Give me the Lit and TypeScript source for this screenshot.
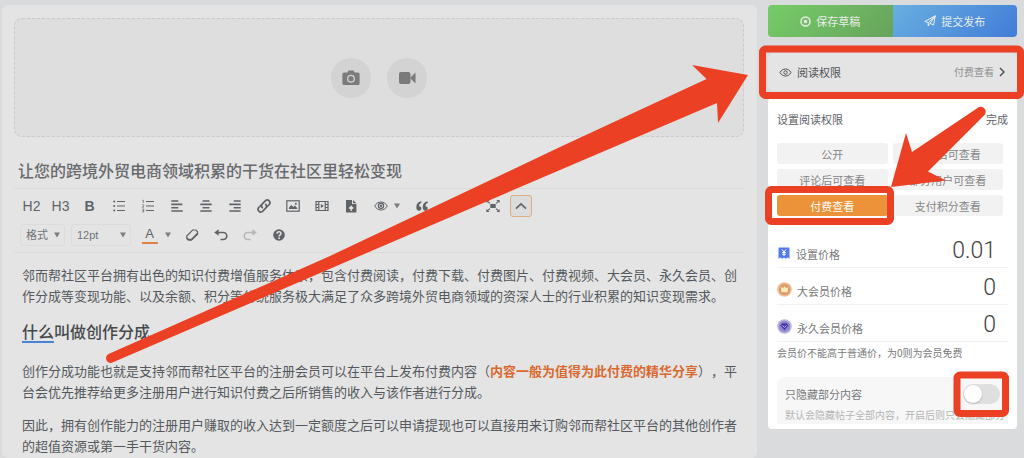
import { LitElement, html, css, svg, TemplateResult } from "lit";
import { customElement, state } from "lit/decorators.js";
import { classMap } from "lit/directives/class-map.js";

const caret = html`<svg class="caret" viewBox="0 0 6 6" aria-hidden="true"><path d="M0 .5h6L3 5.500z" fill="currentColor"/></svg>`;

const glyph = (body: TemplateResult | unknown, size = 16) =>
  html`<svg width=${size} height=${size} viewBox="0 0 16 16" fill="none" stroke="currentColor" stroke-width="1.2" aria-hidden="true">${body}</svg>`;

const icons: Record<string, unknown> = {
  ul: svg`<path d="M6 3.500h8M6 8h8M6 12.500h8" stroke-width="1"/><g fill="currentColor" stroke="none"><circle cx="3.200" cy="3.500" r="1"/><circle cx="3.200" cy="8" r="1"/><circle cx="3.200" cy="12.500" r="1"/></g>`,
  ol: svg`<path d="M6 3.500h8M6 8h8M6 12.500h8" stroke-width="1"/><path d="M2.400 2.500l.9-.5v3M2.200 6.800h1.400v1L2.300 9.300h1.500M2.200 11h1.500v3H2.200M2.500 12.500h1.200" stroke-width=".7"/>`,
  left: svg`<path d="M2.300 3h7M2.300 6.400h11M2.300 9.700h7M2.300 13h11.400" stroke-width="1.600"/>`,
  center: svg`<path d="M4.500 3h7M2.300 6.400h11.400M4.500 9.700h7M2.300 13h11.400" stroke-width="1.600"/>`,
  right: svg`<path d="M6.700 3h7M2.300 6.400h11.400M6.700 9.700h7M2.300 13h11.400" stroke-width="1.600"/>`,
  link: svg`<g stroke-width="1.700" stroke-linecap="round"><path d="M6.300 9.700a2.700 2.700 0 0 1 0-3.800l3.200-3.200a2.700 2.700 0 0 1 3.800 3.800l-2 2"/><path d="M9.700 6.300a2.700 2.700 0 0 1 0 3.800l-3.200 3.200a2.700 2.700 0 0 1-3.800-3.800l2-2"/></g>`,
  image: svg`<rect x="1.800" y="2.800" width="12.400" height="10.400"/><path d="M4 11V9.500L6.300 7l2 2 1.500-1.400L12.200 10v1z" fill="currentColor" stroke="none"/><circle cx="10.800" cy="5.800" r="1" fill="currentColor" stroke="none"/>`,
  film: svg`<path d="M2 3.500h12v9H2zM4.800 3.500v9M11.200 3.500v9M2 6.500h2.800M2 9.500h2.800M11.200 6.500H14M11.200 9.500H14"/><path d="M6.800 5.900v4.200L9.900 8z" fill="currentColor" stroke="none"/>`,
  file: svg`<path d="M3 2h6v4h4.400v8.500H3zM10 2l3.400 3.300H10z" fill="currentColor" stroke="none"/><path d="M8.200 13V9M6.200 10.600l2-2.100 2 2.100" stroke="#e4e4e4" stroke-width="1.400"/>`,
  eye: svg`<path d="M1.700 8c1.500-2.600 3.700-4 6.300-4s4.800 1.400 6.300 4c-1.500 2.600-3.700 4-6.300 4S3.200 10.600 1.700 8z" stroke-width="1"/><circle cx="8" cy="7.700" r="2.600" stroke-width="1.200"/><circle cx="8" cy="7.700" r="1.200" fill="currentColor" stroke="none"/>`,
  quote: svg`<path d="M7 3.300C4 4 2.300 6.200 2.300 9.300c0 2 1 3.400 2.700 3.400 1.300 0 2.300-1 2.300-2.300S6.400 8.200 5.100 8.200c0-1.700.9-2.900 2.500-3.500zM13.400 3.300C10.400 4 8.700 6.200 8.700 9.300c0 2 1 3.400 2.700 3.400 1.300 0 2.300-1 2.300-2.300s-.9-2.200-2.200-2.200c0-1.700.9-2.900 2.500-3.500z" fill="currentColor" stroke="none"/>`,
  code: svg`<path d="M5.500 4.500L2 8l3.500 3.500M10.500 4.500L14 8l-3.500 3.500" stroke-width="1.500"/>`,
  full: svg`<rect x="5.300" y="6" width="5.400" height="4" fill="currentColor" stroke="none"/><path d="M4 4.600L2 3M12 4.600L14 3M5 10.600L2 13M11 10.600L14 13M5 5.400L4 4.600M11 5.400l1-.8"/><path d="M1.400 2h3.200L1.400 5zM14.600 2h-3.200l3.200 3zM1.400 14h3.200l-3.200-3zM14.600 14h-3.200l3.200-3z" fill="currentColor" stroke="none"/>`,
  up: svg`<path d="M2.300 11L8 5.500l5.700 5.500" stroke-width="1.900"/>`,
  eraser: svg`<path d="M8.600 3h3.200l1.800 1.700v2.500L7.600 13H4.300l-1.500-1.500V9z" stroke-width="1.200"/><path d="M3 10.300l1.700 1.500h2.600l6-6.200v2L7.800 13.500H4.200L2.600 12z" fill="currentColor" stroke="none"/>`,
  undo: svg`<path d="M4 5.500h6.300a3.500 3.500 0 0 1 0 7H7.500" stroke-width="1.600"/><path d="M5.600 2.200v6.600L1.200 5.500z" fill="currentColor" stroke="none"/>`,
  redo: svg`<path d="M12 5.500H5.700a3.500 3.500 0 0 0 0 7h2.800" stroke-width="1.500"/><path d="M10.400 2.200v6.600l4.400-3.300z" fill="currentColor" stroke="none"/>`,
  help: svg`<circle cx="8" cy="8" r="5.800" fill="currentColor" stroke="none"/><path d="M6 6.600C6.100 5.300 7 4.700 8 4.700s2 .7 2 1.800c0 1.300-1.900 1.400-1.900 2.900" stroke="#e4e4e4" stroke-width="1.500"/><circle cx="8.100" cy="11.200" r=".9" fill="#e4e4e4" stroke="none"/>`,
};

const tools: [string, string, boolean?][] = [
  ["ul", "无序列表"], ["ol", "有序列表"], ["left", "左对齐"], ["center", "居中"], ["right", "右对齐"],
  ["link", "链接"], ["image", "图片"], ["film", "视频"], ["file", "文件"], ["eye", "隐藏内容", true],
  ["quote", "引用"], ["code", "代码", true], ["full", "全屏"],
];

const options = ["公开", "登录后可查看", "评论后可查看", "部分用户可查看", "付费查看", "支付积分查看"];

@customElement("post-editor")
export class PostEditor extends LitElement {
  static styles = css`
    :host { display: block; background: #e4e4e4; border-radius: 6px; padding: 13px 13px 0 12px; min-width: 0; color: #54585c; }
    * { box-sizing: border-box; }
    svg { display: block; flex: none; }
    button, input, select { font: inherit; color: inherit; background: none; border: 0; padding: 0; margin: 0; }
    .upload { height: 119px; border: 1px dashed #cbcbcb; border-radius: 8px; background: #dedede; display: flex; align-items: center; justify-content: center; gap: 16px; }
    .round { width: 40px; height: 40px; border-radius: 50%; background: #d3d3d3; color: #7b7b7b; display: grid; place-items: center; }
    .title { display: block; width: 100%; height: 24px; margin: 21px 0 6px; padding: 0 4px; font-size: 16px; font-weight: 500; color: #67696d; }
    .toolbar { border: 1px solid #dadada; border-width: 1px 0; padding: 6px 3px; display: grid; gap: 7px; font-family: "Liberation Sans", "Noto Sans CJK SC", sans-serif; font-size: 14px; color: #5f6367; }
    .row { display: flex; align-items: center; height: 22px; }
    .tool { width: 29px; height: 22px; display: flex; align-items: center; justify-content: center; gap: 5px; line-height: 22px; }
    .bold { font-weight: 700; }
    .wide { width: 42px; }
    .open { width: 22px; margin-left: 3px; border: 1px solid #dcaf82; border-radius: 3px; background: #dcdcdc; }
    .faded { color: #b4b6b8; }
    .caret { width: 6px; height: 6px; color: #7b7d80; }
    .pick { display: grid; grid-template-columns: 1fr 6px; align-items: center; height: 22px; border: 1px solid #dcdcdc; border-radius: 3px; padding: 0 4px 0 5px; margin-left: 3px; font-size: 11px; color: #707376; }
    .pick select { grid-area: 1 / 1 / 2 / 3; appearance: none; width: 100%; outline: 0; }
    .pick .caret { grid-area: 1 / 2; pointer-events: none; }
    .format { width: 45px; }
    .size { width: 60px; margin-left: 6px; margin-right: 4px; }
    .letter { width: 16px; height: 18px; line-height: 16px; border-bottom: 2px solid #e0824a; font-size: 13px; }
    .color { width: 42px; gap: 7px; }
    .content { padding: 11px 0 0 8px; font-size: 13px; line-height: 21px; text-spacing-trim: space-all; }
    .content p { margin: 0 0 12px; }
    .content p:last-child { margin: 0; }
    .content h2 { margin: 13px 0 17px; font-size: 16px; line-height: 24px; font-weight: 500; color: #46494c; }
    .mark { background: linear-gradient(#4a83d6, #4a83d6) bottom / 100% 2px no-repeat; }
    .content strong { color: #d9692f; font-weight: 700; }
  `;

  render() {
    return html`
      <div class="upload">
        <button class="round" aria-label="上传图片">
          <svg width="18" height="16" viewBox="0 0 18 16"><path d="M2 2.500h3.500L6.500.6h5l1 1.900H16A1.600 1.600 0 0 1 17.600 4v9.400A1.600 1.600 0 0 1 16 15H2a1.600 1.600 0 0 1-1.600-1.600V4A1.600 1.600 0 0 1 2 2.500z" fill="currentColor"/><circle cx="9" cy="8.700" r="3.300" fill="none" stroke="#d3d3d3" stroke-width="1.300"/></svg>
        </button>
        <button class="round" aria-label="上传视频">
          <svg width="17" height="12" viewBox="0 0 17 12"><rect width="11.500" height="12" rx="2" fill="currentColor"/><path d="M11 6l5.500-5.400v10.800z" fill="currentColor"/></svg>
        </button>
      </div>
      <input class="title" aria-label="标题" value="让您的跨境外贸电商领域积累的干货在社区里轻松变现" />
      <div class="toolbar" role="toolbar" aria-label="编辑器工具">
        <div class="row">
          <button class="tool">H2</button>
          <button class="tool">H3</button>
          <button class="tool bold">B</button>
          ${tools.map(([id, label, menu]) => html`
            <button class=${classMap({ tool: true, wide: !!menu })} aria-label=${label}>${glyph(icons[id])}${menu ? caret : ""}</button>`)}
          <button class="tool open" aria-label="收起工具栏">${glyph(icons.up, 14)}</button>
        </div>
        <div class="row">
          <label class="pick format"><select aria-label="格式"><option>格式</option></select>${caret}</label>
          <label class="pick size"><select aria-label="字号"><option>12pt</option></select>${caret}</label>
          <button class="tool color" aria-label="文字颜色"><span class="letter">A</span>${caret}</button>
          <button class="tool" aria-label="清除格式">${glyph(icons.eraser)}</button>
          <button class="tool" aria-label="撤销">${glyph(icons.undo)}</button>
          <button class="tool faded" aria-label="重做">${glyph(icons.redo)}</button>
          <button class="tool" aria-label="帮助">${glyph(icons.help)}</button>
        </div>
      </div>
      <article class="content">
        <p>邻而帮社区平台拥有出色的知识付费增值服务体系，包含付费阅读，付费下载、付费图片、付费视频、大会员、永久会员、创作分成等变现功能、以及余额、积分等传统服务极大满足了众多跨境外贸电商领域的资深人士的行业积累的知识变现需求。</p>
        <h2><span class="mark">什么</span>叫做创作分成</h2>
        <p>创作分成功能也就是支持邻而帮社区平台的注册会员可以在平台上发布付费内容（<strong>内容一般为值得为此付费的精华分享</strong>），平台会优先推荐给更多注册用户进行知识付费之后所销售的收入与该作者进行分成。</p>
        <p>因此，拥有创作能力的注册用户赚取的收入达到一定额度之后可以申请提现也可以直接用来订购邻而帮社区平台的其他创作者的超值资源或第一手干货内容。</p>
      </article>`;
  }
}

@customElement("post-settings")
export class PostSettings extends LitElement {
  @state() private selected = 4;

  static styles = css`
    :host { display: block; font-size: 11px; line-height: 16px; color: #77797b; }
    * { box-sizing: border-box; }
    svg { display: block; flex: none; }
    button, input { font: inherit; color: inherit; background: none; border: 0; padding: 0; margin: 0; }
    .actions { display: grid; grid-template-columns: 1fr 1fr; border-radius: 4px; overflow: hidden; margin-bottom: 16px; }
    .action { height: 32px; display: flex; align-items: center; justify-content: center; gap: 5px; color: #e9eeea; }
    .save { background: linear-gradient(135deg, #76cc68, #67a35c); }
    .submit { background: linear-gradient(135deg, #68afe0, #427cd8); }
    .access { width: 100%; height: 38px; padding: 0 12px 0 11px; border-radius: 6px; background: #e4e4e4; display: flex; align-items: center; gap: 5px; margin-bottom: 7px; color: #505356; }
    .current { margin-left: auto; font-size: 10px; color: #8d8e90; }
    .panel { background: #fff; border-radius: 4px; padding: 12px 9px 5px; }
    .head { display: flex; justify-content: space-between; height: 18px; align-items: center; color: #606266; }
    .head h3 { margin: 0; font-size: 11px; font-weight: 400; }
    .options { display: grid; grid-template-columns: 1fr 1fr; gap: 5px; margin: 15px 5px 15px 0; }
    .option { height: 21px; border-radius: 3px; background: #f2f2f2; color: #858585; }
    .active { background: #ec933a; color: #fff; }
    .price { display: flex; align-items: center; height: 37px; border-bottom: 1px solid #f1f1f1; gap: 5px; padding: 7px 12px 0 0; }
    .price label { padding-top: 2px; flex: none; }
    .price input { flex: 1; min-width: 0; text-align: right; font-family: Roboto, sans-serif; font-size: 23px; font-weight: 300; height: 29px; padding-bottom: 4px; outline: 0; color: #404040; }
    .hint { margin: 3px 0 16px; font-size: 10px; }
    .partial { height: 47px; overflow: hidden; background: #f7f7f7; border-radius: 8px 8px 0 0; padding: 8px 8px 0; }
    .line { display: flex; align-items: center; justify-content: space-between; height: 18px; }
    .switch { appearance: none; width: 37px; height: 20px; border-radius: 10px; background: #dfdfdf; position: relative; }
    .switch::before { content: ""; position: absolute; inset: 1px auto 1px 1px; width: 18px; border-radius: 50%; background: #fff; box-shadow: 0 1px 2px #0003; }
    .switch:checked { background: #ec933a; }
    .note { margin: 4px 0 0; font-size: 10px; color: #b5b5b5; white-space: nowrap; }
  `;

  render() {
    const badge = (a: string, b: string, inner: unknown) => html`<svg width="15" height="15" viewBox="0 0 15 15" aria-hidden="true"><circle cx="7.500" cy="7.500" r="7.300" fill=${a}/><circle cx="7.500" cy="7.500" r="5.700" fill=${b}/>${inner}</svg>`;
    const prices = [
      { id: "base", label: "设置价格", value: "0.01", icon: html`<svg width="14" height="14" viewBox="0 0 14 14" aria-hidden="true"><path d="M2.500 1.500h9a1 1 0 0 1 1 1v10.300l-2-1.300-1.700 1.300L7 11.500l-1.800 1.300-1.700-1.300-2 1.300V2.500a1 1 0 0 1 1-1z" fill="#5578ee"/><path d="M5 3.500l2 2.500 2-2.500M7 6v4M5.200 6.500h3.600M5.200 8.200h3.600" fill="none" stroke="#fff"/></svg>` },
      { id: "vip", label: "大会员价格", value: "0", icon: badge("#edc09b", "#dd996b", svg`<path d="M3.800 4.800l2.100 1.500 1.600-2.400 1.600 2.400 2.100-1.500-.6 5.400H4.400z" fill="#fdeab6"/>`) },
      { id: "life", label: "永久会员价格", value: "0", icon: badge("#bbb5e0", "#9189cb", svg`<path d="M5.200 4.300h4.600l1.800 2.200-4.100 4.700-4.100-4.700z" fill="#463ba0"/><path d="M5.500 6.500l2 1.900 2-1.900" fill="none" stroke="#c9c2f2" stroke-width=".9"/>`) },
    ];
    return html`
      <div class="actions">
        <button class="action save"><svg width="11" height="11" viewBox="0 0 11 11"><circle cx="5.500" cy="5.500" r="4.500" fill="none" stroke="currentColor" stroke-width="1.400"/><circle cx="5.500" cy="5.500" r="1.700" fill="currentColor"/></svg>保存草稿</button>
        <button class="action submit"><svg width="12" height="12" viewBox="0 0 12 12" fill="none" stroke="currentColor" stroke-linejoin="round"><path d="M.8 6.500L11.300.8 9.500 10 6 8.300 4.200 11V7.600zM4.200 7.600L11.300.8 6 8.300"/></svg>提交发布</button>
      </div>
      <button class="access">
        <svg width="13" height="13" viewBox="0 0 13 13" fill="none" stroke="currentColor"><path d="M1 6.500C2.300 4.200 4.200 3 6.500 3S10.700 4.200 12 6.500C10.700 8.800 8.800 10 6.500 10S2.300 8.800 1 6.500z"/><circle cx="6.500" cy="6.500" r="1.700"/></svg>
        阅读权限<span class="current">付费查看</span>
        <svg width="6" height="10" viewBox="0 0 6 10" fill="none" stroke="currentColor" stroke-width="1.500"><path d="M1 1l4 4-4 4"/></svg>
      </button>
      <section class="panel">
        <div class="head"><h3>设置阅读权限</h3><button>完成</button></div>
        <div class="options">
          ${options.map((text, i) => html`<button class=${classMap({ option: true, active: i === this.selected })} aria-pressed=${i === this.selected} @click=${() => (this.selected = i)}>${text}</button>`)}
        </div>
        ${prices.map((p) => html`<div class="price">${p.icon}<label for=${p.id}>${p.label}</label><input id=${p.id} inputmode="decimal" value=${p.value} /></div>`)}
        <p class="hint">会员价不能高于普通价，为0则为会员免费</p>
        <div class="partial">
          <div class="line"><label for="partial">只隐藏部分内容</label><input id="partial" class="switch" type="checkbox" role="switch" /></div>
          <p class="note">默认会隐藏帖子全部内容，开启后则只会隐藏部分</p>
        </div>
      </section>`;
  }
}

@customElement("app-root")
export class AppRoot extends LitElement {
  static styles = css`
    :host { display: grid; grid-template-columns: minmax(0, 1fr) 249px; gap: 11px; box-sizing: border-box; min-height: 100vh; padding: 5px 7px 0 2px; position: relative; overflow: hidden; background: #dadbdd; font-family: "Noto Sans CJK SC", "Noto Sans", sans-serif; }
    .guide { position: absolute; top: 0; right: 0; width: 1024px; height: 458px; pointer-events: none; }
  `;

  render() {
    return html`
      <post-editor></post-editor>
      <post-settings></post-settings>
      <svg class="guide" viewBox="0 0 1024 458" fill="none" stroke="#ec4025" aria-hidden="true">
        <g stroke-width="7">
          <rect x="762.500" y="49" width="258" height="46.500" rx="3"/>
          <rect x="768.500" y="189.500" width="122" height="32" rx="3"/>
          <rect x="957" y="375" width="48.500" height="38.500" rx="3"/>
        </g>
        <g fill="#ec4025" stroke="none">
          <path d="M108.500 354L330 256 560 147 706.500 79 692 65 748 75 718 123 717 103 560 170 362 255 113 362.300A4.600 4.600 0 0 1 108.500 354z"/>
          <path d="M977.500 108L912 152 906 133 891 187 946 180.500 928 171.500 984 115.500A4.800 4.800 0 0 0 977.500 108z"/>
        </g>
      </svg>`;
  }
}
